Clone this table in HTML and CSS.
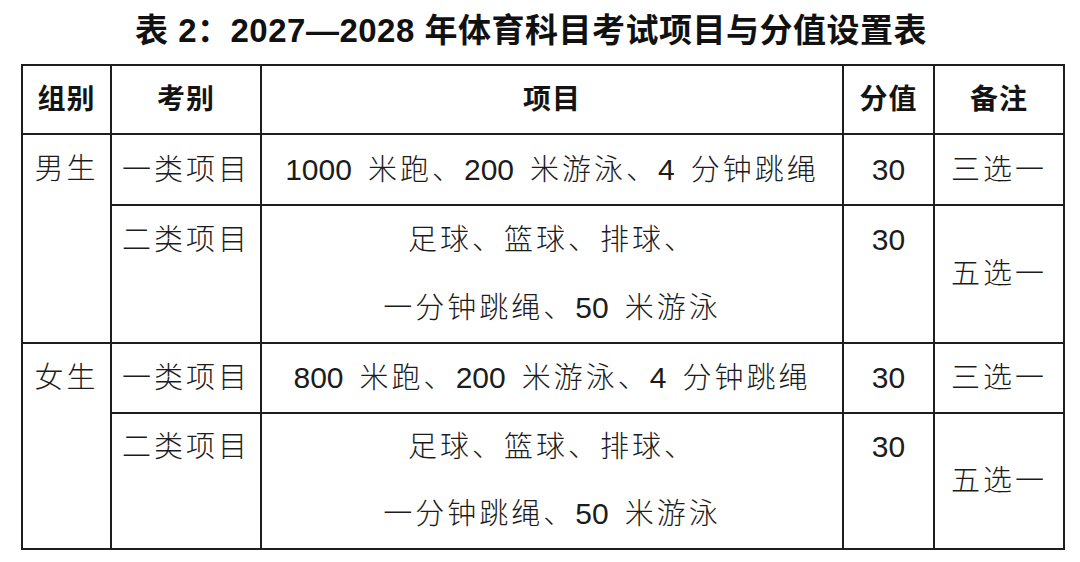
FILE: index.html
```html
<!DOCTYPE html>
<html lang="zh-CN">
<head>
<meta charset="utf-8">
<title>表2</title>
<link rel="stylesheet" href="styles.css">
</head>
<body>
<div class="page">
  <h1 class="title">表 2：2027—2028 年体育科目考试项目与分值设置表</h1>
  <table class="grid">
    <colgroup>
      <col class="c1"><col class="c2"><col class="c3"><col class="c4"><col class="c5">
    </colgroup>
    <thead>
      <tr class="head">
        <th>组别</th><th>考别</th><th>项目</th><th>分值</th><th>备注</th>
      </tr>
    </thead>
    <tbody>
      <tr class="r1">
        <td class="top" rowspan="2">男生</td>
        <td>一类项目</td>
        <td><span class="num">1000</span> 米跑、<span class="num">200</span> 米游泳、<span class="num">4</span> 分钟跳绳</td>
        <td><span class="num">30</span></td>
        <td>三选一</td>
      </tr>
      <tr class="r2">
        <td class="top">二类项目</td>
        <td class="top">足球、篮球、排球、<br>一分钟跳绳、<span class="num">50</span> 米游泳</td>
        <td class="top"><span class="num">30</span></td>
        <td>五选一</td>
      </tr>
      <tr class="r3">
        <td class="top" rowspan="2">女生</td>
        <td>一类项目</td>
        <td><span class="num">800</span> 米跑、<span class="num">200</span> 米游泳、<span class="num">4</span> 分钟跳绳</td>
        <td><span class="num">30</span></td>
        <td>三选一</td>
      </tr>
      <tr class="r4">
        <td class="top">二类项目</td>
        <td class="top">足球、篮球、排球、<br>一分钟跳绳、<span class="num">50</span> 米游泳</td>
        <td class="top"><span class="num">30</span></td>
        <td>五选一</td>
      </tr>
    </tbody>
  </table>
</div>
</body>
</html>
```

FILE: styles.css
```css
html, body {
  margin: 0;
  padding: 0;
  background: #ffffff;
}

.page {
  width: 1080px;
  height: 562px;
  overflow: hidden;
  font-family: "Liberation Sans", "Noto Sans CJK SC", sans-serif;
  color: #1c1c1c;
}

.title {
  margin: 0;
  height: 64px;
  line-height: 62px;
  padding-right: 18px;
  text-align: center;
  font-size: 33px;
  font-weight: 700;
  color: #111111;
  letter-spacing: 0.5px;
}

.grid {
  margin-left: 21px;
  border-collapse: collapse;
  table-layout: fixed;
  width: 1042px;
}

.c1 { width: 89px; }
.c2 { width: 150px; }
.c3 { width: 582px; }
.c4 { width: 91px; }
.c5 { width: 130px; }

.grid th,
.grid td {
  border: 2px solid #1e1e1e;
  padding: 0;
  text-align: center;
  vertical-align: middle;
}

.grid th {
  font-size: 28px;
  font-weight: 700;
  height: 67px;
  line-height: 67px;
  letter-spacing: 1px;
  color: #141414;
}

.grid td {
  font-size: 29px;
  font-weight: 300;
  line-height: 68px;
  letter-spacing: 3px;
  word-spacing: 5px;
  white-space: nowrap;
}

.grid td.top {
  vertical-align: top;
}

.num {
  font-size: 30px;
  line-height: 1;
  letter-spacing: 0;
}

.r1 td { height: 69px; }
.r3 td { height: 64px; }
.r4 td { line-height: 67px; }
```
